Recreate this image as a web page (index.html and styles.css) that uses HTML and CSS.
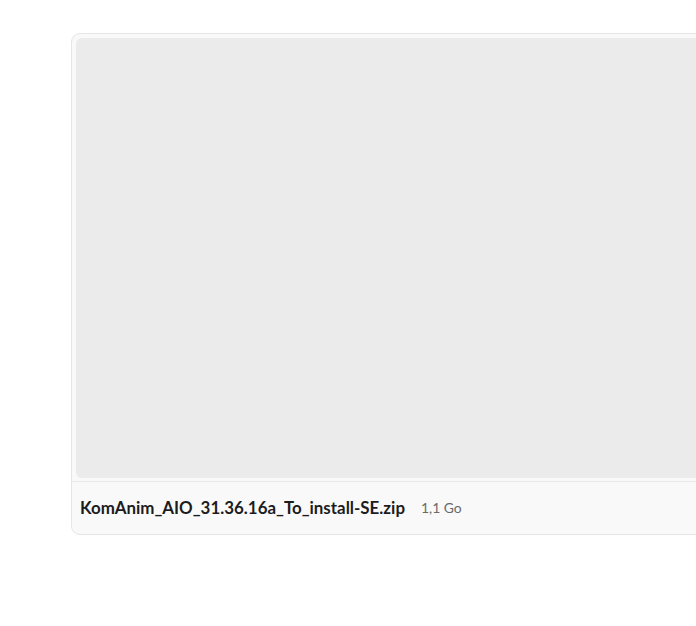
FILE: index.html
```
<!DOCTYPE html>
<html>
<head>
<meta charset="utf-8">
<title>file</title>
<link rel="stylesheet" href="styles.css">
</head>
<body>
<div class="card">
	<div class="preview"></div>
	<div class="foot">
		<span class="name">KomAnim_AIO_31.36.16a_To_install-SE.zip</span>
		<span class="size">1,1 Go</span>
	</div>
</div>
</body>
</html>
```
FILE: styles.css
```
* {margin:0;padding:0;box-sizing:border-box;}
html,body {background:#fff;overflow:hidden;}
body {font-family:Lato,"Liberation Sans",sans-serif;}
.card {margin:33px 0 0 71px;width:700px;background:#f9f9f9;border:1px solid #e6e6e6;border-radius:9px;}
.preview {margin:4px 4px 3px;height:440px;background:#ebebeb;border-radius:6px;}
.foot {border-top:1px solid #e8e8e8;height:53px;display:flex;align-items:center;padding:0 0 2px 8px;gap:16px;}
.name {font-size:16.9px;font-weight:700;color:#1d1c1d;}
.size {font-size:13.9px;color:#696969;}
```
